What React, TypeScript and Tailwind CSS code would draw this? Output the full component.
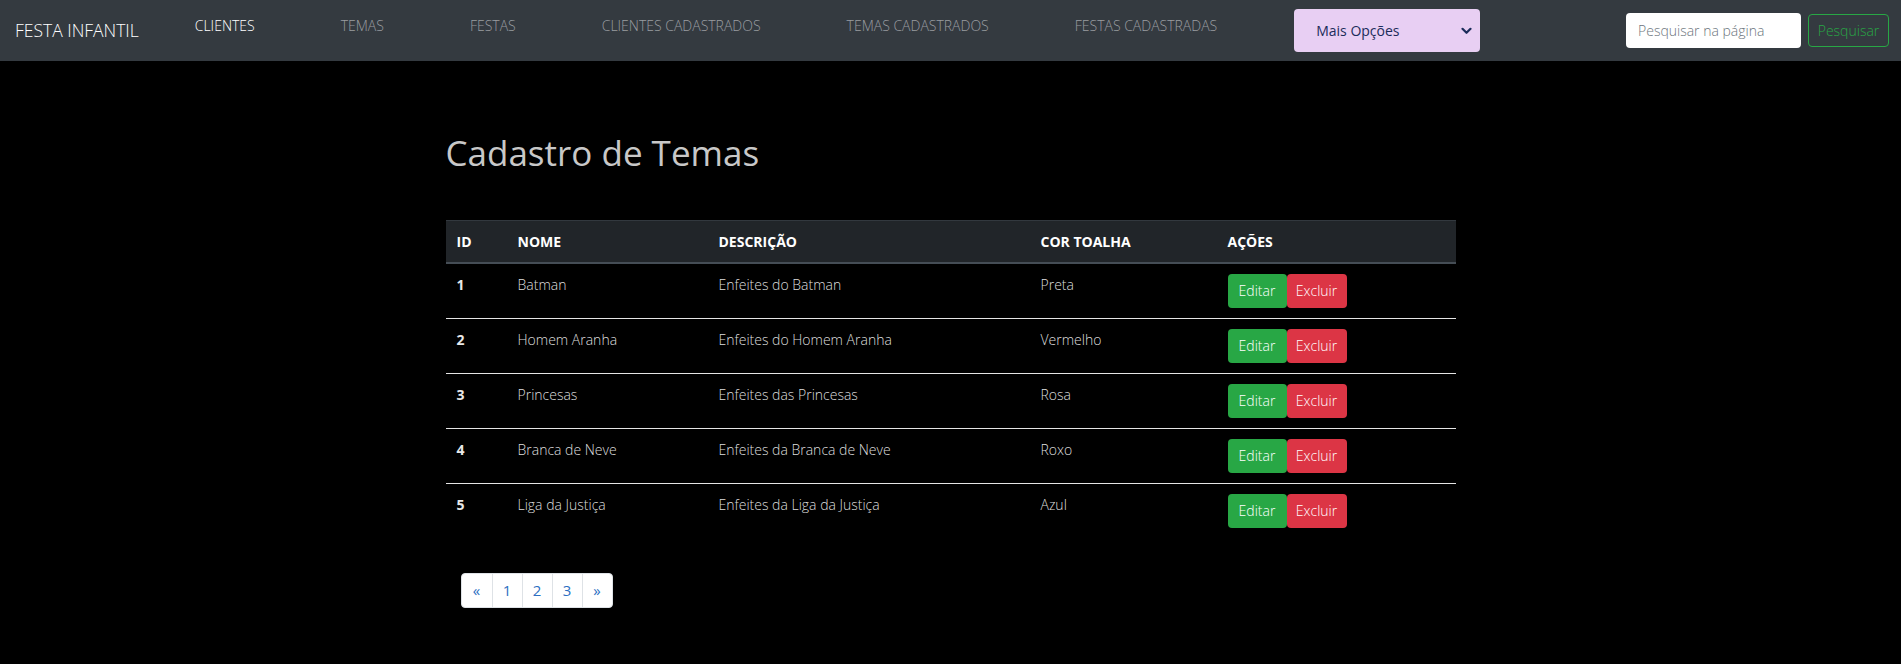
import React from "react";

const navLinks = [
  "CLIENTES",
  "TEMAS",
  "FESTAS",
  "CLIENTES CADASTRADOS",
  "TEMAS CADASTRADOS",
  "FESTAS CADASTRADAS",
];

const temas = [
  { id: 1, nome: "Batman", descricao: "Enfeites do Batman", cor: "Preta" },
  { id: 2, nome: "Homem Aranha", descricao: "Enfeites do Homem Aranha", cor: "Vermelho" },
  { id: 3, nome: "Princesas", descricao: "Enfeites das Princesas", cor: "Rosa" },
  { id: 4, nome: "Branca de Neve", descricao: "Enfeites da Branca de Neve", cor: "Roxo" },
  { id: 5, nome: "Liga da Justiça", descricao: "Enfeites da Liga da Justiça", cor: "Azul" },
];

const Navbar = () => (
  <nav className="flex h-[61px] items-center bg-[#343a40] pl-[15px] pr-[12px]">
    <span className="text-[17.5px] font-light text-white">FESTA INFANTIL</span>
    <ul className="ml-[56px] flex gap-[86px] self-start pt-[14px]">
      {navLinks.map((l, i) => (
        <li
          key={l}
          className={`text-[14px] font-light leading-6 ${
            i === 0 ? "text-white" : "text-[#9a9da1]"
          }`}
        >
          {l}
        </li>
      ))}
    </ul>
    <div className="ml-[77px] flex h-[43px] w-[186px] items-center justify-between rounded-[4px] bg-[#e8cff3] pl-[22px] pr-[8px] text-[14px] text-[#1b2c5a]">
      <span>Mais Opções</span>
      <svg width="11" height="8" viewBox="0 0 11 8" fill="none">
        <path d="M1.5 1.8 L5.5 5.8 L9.5 1.8" stroke="#1b2c5a" strokeWidth="2.2" strokeLinecap="round" strokeLinejoin="round" />
      </svg>
    </div>
    <div className="ml-auto flex items-center gap-[7px]">
      <input
        className="h-[35px] w-[175px] rounded-[4px] bg-white px-[12px] text-[14px] font-light outline-none placeholder:text-[#6c757d]"
        placeholder="Pesquisar na página"
      />
      <button className="h-[33px] w-[81px] rounded-[4px] border border-[#28a745] text-[14px] font-light text-[#28a745]">
        Pesquisar
      </button>
    </div>
  </nav>
);

const Tabela = () => (
  <table className="w-[1010px] table-fixed border-collapse text-left text-[14px]">
    <colgroup>
      <col className="w-[61px]" />
      <col className="w-[201px]" />
      <col className="w-[322px]" />
      <col className="w-[187px]" />
      <col />
    </colgroup>
    <thead>
      <tr className="h-[42px] border-t border-b-2 border-t-[#32383e] border-b-[#454d55] bg-[#212529] font-bold text-white">
        <th className="px-[11px]">ID</th>
        <th className="px-[11px]">NOME</th>
        <th className="px-[11px]">DESCRIÇÃO</th>
        <th className="px-[11px]">COR TOALHA</th>
        <th className="px-[11px]">AÇÕES</th>
      </tr>
    </thead>
    <tbody>
      {temas.map((t, i) => (
        <tr
          key={t.id}
          className={`align-top text-[#dedede] ${i < temas.length - 1 ? "border-b border-[#e5e5e5]" : ""}`}
        >
          <td className="px-[11px] py-[10px] leading-[21px] font-bold text-[#e8e8e8]">{t.id}</td>
          <td className="px-[11px] py-[10px] leading-[21px] font-light">{t.nome}</td>
          <td className="px-[11px] py-[10px] leading-[21px] font-light">{t.descricao}</td>
          <td className="px-[11px] py-[10px] leading-[21px] font-light">{t.cor}</td>
          <td className="px-[11px] py-[10px]">
            <div className="flex">
              <button className="h-[34px] w-[59px] rounded-[4px] bg-[#28a745] text-[14px] font-light text-white">
                Editar
              </button>
              <button className="h-[34px] w-[60px] rounded-[4px] bg-[#dc3545] text-[14px] font-light text-white">
                Excluir
              </button>
            </div>
          </td>
        </tr>
      ))}
    </tbody>
  </table>
);

const Paginacao = () => (
  <ul className="flex h-[35px] w-fit overflow-hidden rounded-[4px] border border-[#dee2e6] bg-white text-[15px] text-[#2c6fc2]">
    {["«", "1", "2", "3", "»"].map((p, i) => (
      <li
        key={i}
        className={`flex w-[30px] items-center justify-center ${i > 0 ? "border-l border-[#dee2e6]" : ""}`}
      >
        {p}
      </li>
    ))}
  </ul>
);

export default function App() {
  return (
    <div className="min-h-screen bg-black font-['Open_Sans',sans-serif]">
      <Navbar />
      <main className="mx-auto w-[1010px]">
        <h2 className="mt-[71px] mb-[47px] text-[35px] leading-[41px] text-[#c8c8c8]">Cadastro de Temas</h2>
        <Tabela />
        <div className="mt-[35px] pl-[15px]">
          <Paginacao />
        </div>
      </main>
    </div>
  );
}
